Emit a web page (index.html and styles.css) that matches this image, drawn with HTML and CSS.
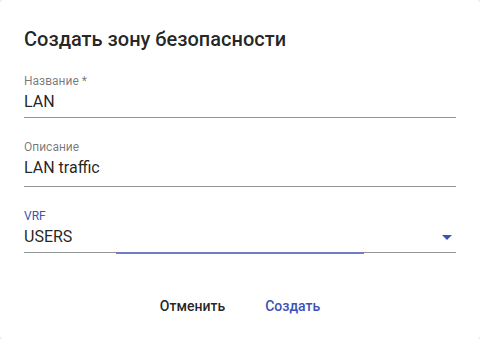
FILE: index.html
```html
<!DOCTYPE html>
<html lang="ru">

<head>
    <meta charset="UTF-8">
    <meta name="viewport" content="width=device-width, initial-scale=1.0">
    <title>Создать зону безопасности</title>
    <link rel="stylesheet" href="styles.css">
</head>

<body>
    <div class="dialog">
        <h2 class="dialog-title">Создать зону безопасности</h2>

        <div class="field">
            <label class="field-label">Название *</label>
            <div class="field-value">LAN</div>
        </div>

        <div class="field">
            <label class="field-label">Описание</label>
            <div class="field-value field-textarea">LAN traffic</div>
        </div>

        <div class="field field-focused">
            <label class="field-label">VRF</label>
            <div class="field-value select-value">
                <span>USERS</span>
                <span class="arrow"></span>
            </div>
            <div class="ripple"></div>
        </div>

        <div class="actions">
            <button class="btn">Отменить</button>
            <button class="btn btn-primary">Создать</button>
        </div>
    </div>
</body>

</html>
```

FILE: styles.css
```css
body {
    font-family: Roboto, "Liberation Sans", sans-serif;
    background-color: #ededed;
    margin: 0;
    padding: 0;
}

.dialog {
    width: 480px;
    height: 339px;
    box-sizing: border-box;
    padding: 23px 24px 0;
    background-color: #ffffff;
    border-radius: 4px;
}

.dialog-title {
    margin: 0 0 19px;
    font-size: 20px;
    font-weight: 500;
    line-height: 32px;
    color: rgba(0, 0, 0, 0.87);
}

.field {
    position: relative;
    margin-bottom: 22px;
    border-bottom: 1px solid #949494;
}

.field-label {
    display: block;
    font-size: 12px;
    line-height: 14px;
    margin-bottom: 4px;
    color: rgba(0, 0, 0, 0.54);
}

.field-value {
    font-size: 16px;
    line-height: 20px;
    padding-bottom: 5px;
    color: rgba(0, 0, 0, 0.87);
}

/* textarea keeps a few extra pixels below the text */
.field-textarea {
    padding-bottom: 8px;
}

.field-focused .field-label {
    color: #3f51b5;
}

.select-value {
    display: flex;
    align-items: center;
    justify-content: space-between;
}

.arrow {
    width: 0;
    height: 0;
    margin-right: 4px;
    border-left: 5px solid transparent;
    border-right: 5px solid transparent;
    border-top: 5px solid #3f51b5;
}

.ripple {
    position: absolute;
    left: 21.3%;
    width: 57.4%;
    bottom: -2px;
    height: 2px;
    background-color: #6f7dc4;
}

.actions {
    display: flex;
    justify-content: center;
    gap: 8px;
    margin-top: 35px;
}

.btn {
    min-width: 64px;
    padding: 0 16px;
    font-family: inherit;
    font-size: 14px;
    font-weight: 500;
    line-height: 36px;
    color: rgba(0, 0, 0, 0.87);
    background-color: transparent;
    border: none;
    border-radius: 4px;
    cursor: pointer;
}

.btn-primary {
    color: #3f51b5;
}
```
